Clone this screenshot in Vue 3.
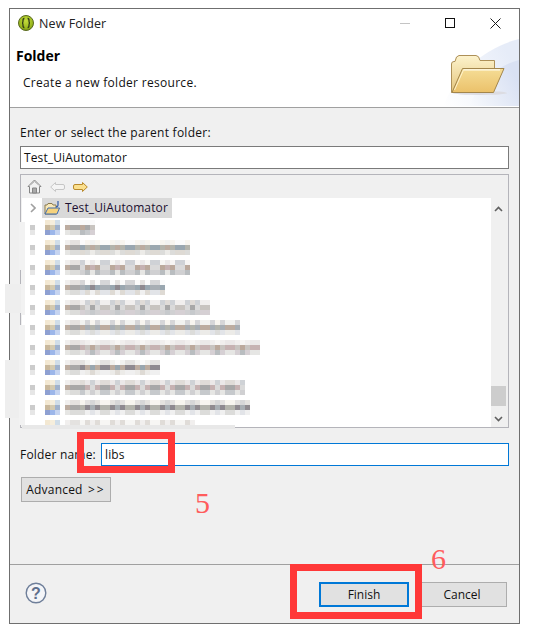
<script setup>
const blurRows = [
  { cols: 6, faint: true },
  { cols: 25 },
  { cols: 25 },
  { cols: 20 },
  { cols: 29 },
  { cols: 35 },
  { cols: 39 },
  { cols: 19 },
  { cols: 36 },
  { cols: 37 },
  { cols: 26 },
];

const tones = [
  ['#f1efee', '#e4e2e0', '#f7f6f4', '#d6d6d8', '#ebe8e8', '#f8f5ef', '#cfd2d6', '#f2f2f0', '#e0dcd8', '#fbfbfb'],
  ['#bcaca0', '#a8a8a8', '#9aa7b0', '#c8c4c0', '#8f8a90', '#bba99c', '#a8aeb4', '#c6b2b2', '#b4b4ac', '#dadada'],
  ['#e6e6e4', '#dcdcda', '#d0d0d2', '#ecebe8', '#c6c9cc', '#dedad4', '#d6d0d4', '#f0f0f0', '#b9bdc0', '#e2e4e8'],
];

// fixed pseudo-random mosaic for the blurred file names
const cellColor = (rowIndex, line, col) => {
  if (col < 3) return tones[line][col === 0 ? 0 : 1];
  const n = (rowIndex * 7 + line * 13 + col * col * 3 + col * 5) % 10;
  return tones[line][n];
};
const cells = (row, rowIndex) => {
  const list = [];
  for (let line = 0; line < 3; line++) {
    for (let col = 0; col < row.cols; col++) {
      list.push(row.faint && line === 0 ? '#fafafa' : cellColor(rowIndex, line, col));
    }
  }
  return list;
};
const iconCells = ['#f3e8d2', '#f6eedc', '#d0dde8', '#c9b89c', '#d4cab0', '#a0b2cc', '#8ea0d2', '#9cb6ea', '#c6d4f0'];
</script>

<template>
  <div class="page">
    <div class="window">
      <header class="banner">
        <svg class="wash" viewBox="0 0 80 67" width="80" height="67">
          <defs>
            <linearGradient id="washFill" x1="0" y1="1" x2="1" y2="0.5">
              <stop offset="0" stop-color="#ffffff" />
              <stop offset="1" stop-color="#e6ecf8" />
            </linearGradient>
            <linearGradient id="washDeep" x1="0" y1="1" x2="1" y2="0.5">
              <stop offset="0" stop-color="#f8fafd" />
              <stop offset="1" stop-color="#d9e1f3" />
            </linearGradient>
          </defs>
          <path d="M4 67 C20 30 48 8 80 0 V67 Z" fill="url(#washFill)" />
          <path d="M30 67 C42 40 60 26 80 21 V67 Z" fill="url(#washDeep)" />
        </svg>
        <svg class="big-folder" viewBox="0 0 58 41" width="58" height="41">
          <defs>
            <linearGradient id="backFill" x1="0" y1="0" x2="0" y2="1">
              <stop offset="0" stop-color="#fdf3cd" />
              <stop offset="1" stop-color="#e4c57c" />
            </linearGradient>
            <linearGradient id="frontFill" x1="0" y1="0" x2="0" y2="1">
              <stop offset="0" stop-color="#f5dd96" />
              <stop offset="1" stop-color="#ebc16a" />
            </linearGradient>
          </defs>
          <ellipse cx="30" cy="38" rx="27" ry="2" fill="#dcdce2" />
          <path d="M1.5 37.5 V9 Q1.5 6.5 4 6.5 L5 6.5 Q6 0.5 9 0.5 H26 Q29 0.5 30 5.5 H44.5 V14 H14 L3 37.5 Z" fill="url(#backFill)" stroke="#ad9058" />
          <path d="M2 37.5 L12.5 13.5 H54 L43.5 37.5 Z" fill="url(#frontFill)" stroke="#a3864c" />
          <path d="M13.5 14.8 H50" stroke="#fffdf0" stroke-width="1.3" />
          <path d="M13.5 15 L4.5 35" stroke="#fff3cc" stroke-width="1" />
        </svg>
        <div class="titlebar">
          <svg class="app-icon" viewBox="0 0 16 16" width="16" height="16">
            <defs>
              <radialGradient id="ball" cx="0.5" cy="0.35" r="0.7">
                <stop offset="0" stop-color="#c4dc3c" />
                <stop offset="0.7" stop-color="#98b61c" />
                <stop offset="1" stop-color="#6c8410" />
              </radialGradient>
            </defs>
            <circle cx="8" cy="8" r="7.5" fill="url(#ball)" stroke="#5a6a20" />
            <path d="M6.4 3.5 Q4.8 3.5 5 6 Q5 8 4 8 Q5 8 5 10 Q4.8 12.5 6.4 12.5 M9.6 3.5 Q11.2 3.5 11 6 Q11 8 12 8 Q11 8 11 10 Q11.2 12.5 9.6 12.5" fill="none" stroke="#2f3a18" stroke-width="1.3" />
          </svg>
          <span class="title">New Folder</span>
          <div class="controls">
            <span class="min"></span>
            <span class="max"></span>
            <svg class="close" viewBox="0 0 11 11" width="11" height="11">
              <path d="M0.5 0.5 L10.5 10.5 M10.5 0.5 L0.5 10.5" stroke="#1a1a1a" stroke-width="1" />
            </svg>
          </div>
        </div>
        <h1 class="heading">Folder</h1>
        <p class="desc">Create a new folder resource.</p>
      </header>

      <main class="body">
        <label class="parent-label">Enter or select the parent folder:</label>
        <div class="field parent-field">Test_UiAutomator</div>

        <div class="tree">
          <div class="toolbar">
            <svg viewBox="0 0 15 15" width="15" height="15">
              <path d="M7.5 1 L14 7.5 H12.5 V14 H2.5 V7.5 H1 Z" fill="#f2f2f2" stroke="#858585" stroke-linejoin="round" />
              <path d="M3.5 6 L7.5 2.5 L11.5 6" fill="none" stroke="#b5b5b5" />
              <path d="M5.5 14 V9 H9.5 V14 Z" fill="#a9a9a9" stroke="#858585" />
            </svg>
            <svg viewBox="0 0 15 10" width="15" height="10">
              <path d="M5.5 0.5 L0.7 5 L5.5 9.5 V7.5 H13 Q14.5 7.5 14.5 6 V4 Q14.5 2.5 13 2.5 H5.5 Z" fill="#f4f4f4" stroke="#c6c6c6" />
            </svg>
            <svg viewBox="0 0 15 10" width="15" height="10">
              <path d="M9.5 0.5 L14.3 5 L9.5 9.5 V7.5 H2 Q0.5 7.5 0.5 6 V4 Q0.5 2.5 2 2.5 H9.5 Z" fill="#fbe08e" stroke="#b98a2c" />
            </svg>
          </div>
          <div class="tree-main">
            <div class="list">
              <div class="row row-selected">
                <svg class="chevron" viewBox="0 0 6 10" width="6" height="10">
                  <path d="M1 1 L5 5 L1 9" fill="none" stroke="#a0a0a0" stroke-width="1.6" />
                </svg>
                <div class="selected-item">
                  <svg viewBox="0 0 16 16" width="16" height="16">
                    <path d="M1 14 V5 H3 L4 3.5 H8 L9 5 H12 V14 Z" fill="#f8e8b8" stroke="#8a7a50" />
                    <path d="M1 14 L4 8 H15.5 L13 14 Z" fill="#f6d27c" stroke="#3f6cae" />
                    <path d="M14 1 V5 Q14 7 12 6.5" fill="none" stroke="#2f5aa8" stroke-width="1.2" />
                  </svg>
                  <span>Test_UiAutomator</span>
                </div>
              </div>
              <div v-for="(row, i) in blurRows" :key="i" class="row blur-row">
                <div class="blur-expander"><i></i><i></i></div>
                <div class="blur-icon">
                  <i v-for="(c, k) in iconCells" :key="k" :style="{ background: c }"></i>
                </div>
                <div class="blur-text" :style="{ gridTemplateColumns: `repeat(${row.cols}, 5px)` }">
                  <i v-for="(c, k) in cells(row, i)" :key="k" :style="{ background: c }"></i>
                </div>
              </div>
            </div>
            <div class="scrollbar">
              <svg viewBox="0 0 9 6" width="9" height="6">
                <path d="M1 5 L4.5 1.5 L8 5" fill="none" stroke="#606060" stroke-width="1.6" />
              </svg>
              <div class="track"><div class="thumb"></div></div>
              <svg viewBox="0 0 9 6" width="9" height="6">
                <path d="M1 1 L4.5 4.5 L8 1" fill="none" stroke="#606060" stroke-width="1.6" />
              </svg>
            </div>
          </div>
        </div>

        <div class="name-row">
          <label>Folder name:</label>
          <div class="field name-field">libs</div>
        </div>
        <button class="btn advanced">Advanced <span class="more">&gt;&gt;</span></button>
      </main>

      <footer class="footer">
        <svg class="help" viewBox="0 0 22 22" width="22" height="22">
          <circle cx="11" cy="11" r="9.8" fill="#f4f5f8" stroke="#6f7f9a" stroke-width="1.4" />
          <text x="11" y="16.5" text-anchor="middle" class="help-mark">?</text>
        </svg>
        <div class="actions">
          <button class="btn finish">Finish</button>
          <button class="btn">Cancel</button>
        </div>
      </footer>
    </div>

    <!-- grey smears and annotations painted over the screenshot -->
    <div class="smear smear-a"></div>
    <div class="smear smear-b"></div>
    <div class="smear strip-a"></div>
    <div class="smear strip-b"></div>
    <div class="smear strip-c"></div>
    <div class="smear smear-d"></div>
    <div class="red-box box-name"></div>
    <div class="red-box box-finish"></div>
    <span class="step step-5">5</span>
    <span class="step step-6">6</span>
  </div>
</template>

<style scoped>
.page {
  position: relative;
  width: 533px;
  height: 625px;
  background: #fff;
  overflow: hidden;
  padding: 8px 0 0 9px;
  box-sizing: border-box;
  font-family: "Open Sans", "Noto Sans", sans-serif;
  font-size: 12px;
  color: #111;
}
.window {
  width: 511px;
  height: 616px;
  box-sizing: border-box;
  border: 1px solid #6f6f6f;
  background: #f0f0f0;
  display: flex;
  flex-direction: column;
}
.banner {
  position: relative;
  height: 99px;
  flex: none;
  background: #fff;
  border-bottom: 1px solid #a0a0a0;
  box-sizing: border-box;
}
.wash {
  position: absolute;
  right: 0;
  bottom: 1px;
}
.big-folder {
  position: absolute;
  left: 440px;
  top: 46px;
}
.titlebar {
  display: flex;
  align-items: center;
  height: 28px;
  padding: 0 18px 0 8px;
}
.title {
  margin-left: 5px;
  font-size: 12.5px;
  letter-spacing: 0.1px;
  color: #222;
}
.controls {
  margin-left: auto;
  display: flex;
  align-items: center;
  gap: 35px;
}
.min {
  width: 10px;
  height: 1px;
  background: #c4c4c4;
}
.max {
  width: 8px;
  height: 8px;
  border: 1px solid #111;
}
.heading {
  margin: 10px 0 0 6px;
  font-size: 14px;
  line-height: 18px;
  font-weight: 700;
  color: #000;
}
.desc {
  margin: 10px 0 0 13px;
  font-size: 12px;
  line-height: 16px;
  letter-spacing: 0.3px;
}
.body {
  flex: 1;
  display: flex;
  flex-direction: column;
  padding: 17px 10px 0;
  min-height: 0;
}
.parent-label {
  line-height: 16px;
  letter-spacing: 0.26px;
}
.field {
  height: 23px;
  box-sizing: border-box;
  background: #fff;
  line-height: 21px;
  padding-left: 3px;
  letter-spacing: 0.12px;
}
.parent-field {
  margin-top: 5px;
  border: 1px solid #7a7a7a;
}
.tree {
  margin-top: 5px;
  height: 254px;
  box-sizing: border-box;
  border: 1px solid #b4b4ba;
  display: flex;
  flex-direction: column;
}
.toolbar {
  height: 23px;
  flex: none;
  display: flex;
  align-items: center;
  gap: 8px;
  padding-left: 6px;
}
.tree-main {
  flex: 1;
  min-height: 0;
  display: flex;
  padding-left: 1px;
  padding-right: 2px;
}
.list {
  flex: 1;
  background: #fff;
  overflow: hidden;
}
.row {
  height: 20px;
  display: flex;
  align-items: center;
  box-sizing: border-box;
}
.row-selected {
  padding-left: 8px;
}
.selected-item {
  margin-left: 6px;
  width: 130px;
  height: 20px;
  background: #d9d9d9;
  display: flex;
  align-items: center;
  gap: 5px;
  padding-left: 2px;
  box-sizing: border-box;
  color: #1c1030;
  letter-spacing: 0.12px;
}
.selected-item span {
  margin-top: -2px;
}
.blur-row {
  align-items: flex-start;
  padding: 2px 0 0 8px;
}
.blur-row i {
  display: block;
}
.blur-expander {
  margin-top: 5px;
  width: 5px;
}
.blur-expander i {
  height: 5px;
  background: #cccccc;
}
.blur-expander i + i {
  background: #e6e6e6;
}
.blur-icon {
  margin-left: 10px;
  display: grid;
  grid-template-columns: repeat(3, 5px);
  grid-auto-rows: 5px;
}
.blur-text {
  margin-left: 5px;
  display: grid;
  grid-auto-rows: 5px;
}
.scrollbar {
  width: 15px;
  flex: none;
  display: flex;
  flex-direction: column;
  align-items: center;
  padding: 8px 0 5px;
  box-sizing: border-box;
  gap: 5px;
}
.track {
  flex: 1;
  width: 100%;
  display: flex;
  align-items: flex-end;
}
.thumb {
  width: 100%;
  height: 20px;
  background: #cdcdcd;
  margin-bottom: 5px;
}
.name-row {
  margin-top: 15px;
  display: flex;
  align-items: center;
}
.name-row label {
  width: 81px;
  flex: none;
  letter-spacing: 0.2px;
}
.name-field {
  flex: 1;
  border: 1px solid #0078d7;
}
.btn {
  width: 90px;
  height: 25px;
  box-sizing: border-box;
  border: 1px solid #adadad;
  background: #e1e1e1;
  font: inherit;
  color: #111;
  padding: 0;
}
.advanced {
  margin: 11px 0 0 1px;
  letter-spacing: 0.2px;
}
.more {
  margin-left: 2px;
  letter-spacing: 2px;
}
.footer {
  height: 59px;
  flex: none;
  box-sizing: border-box;
  border-top: 1px solid #a0a0a0;
  display: flex;
  align-items: flex-start;
  justify-content: space-between;
  padding: 17px 12px 0 15px;
}
.help-mark {
  font-family: "Liberation Sans", sans-serif;
  font-size: 16px;
  font-weight: 700;
  fill: #5f6f8c;
}
.actions {
  display: flex;
  gap: 8px;
}
.finish {
  border: 2px solid #0078d7;
}
.smear {
  position: absolute;
  background: #eeeeee;
}
.smear-a {
  left: 5px;
  top: 284px;
  width: 16px;
  height: 29px;
}
.smear-b {
  left: 5px;
  top: 360px;
  width: 16px;
  height: 58px;
}
.strip-a {
  left: 19px;
  top: 222px;
  width: 6px;
  height: 48px;
  background: #f2f2f2;
}
.strip-b {
  left: 21px;
  top: 270px;
  width: 4px;
  height: 45px;
  background: #f2f2f2;
}
.strip-c {
  left: 19px;
  top: 325px;
  width: 6px;
  height: 100px;
  background: #f2f2f2;
}
.smear-d {
  left: 22px;
  top: 425px;
  width: 213px;
  height: 4px;
  background: #e8e8e8;
}
.red-box {
  position: absolute;
  box-sizing: border-box;
  border: 7px solid #ff3838;
}
.box-name {
  left: 77px;
  top: 432px;
  width: 98px;
  height: 41px;
}
.box-finish {
  left: 290px;
  top: 564px;
  width: 132px;
  height: 55px;
}
.step {
  position: absolute;
  font-family: "Liberation Serif", serif;
  font-size: 30px;
  line-height: 30px;
  color: #ff5c5c;
}
.step-5 {
  left: 195px;
  top: 488px;
}
.step-6 {
  left: 431px;
  top: 544px;
}
</style>
